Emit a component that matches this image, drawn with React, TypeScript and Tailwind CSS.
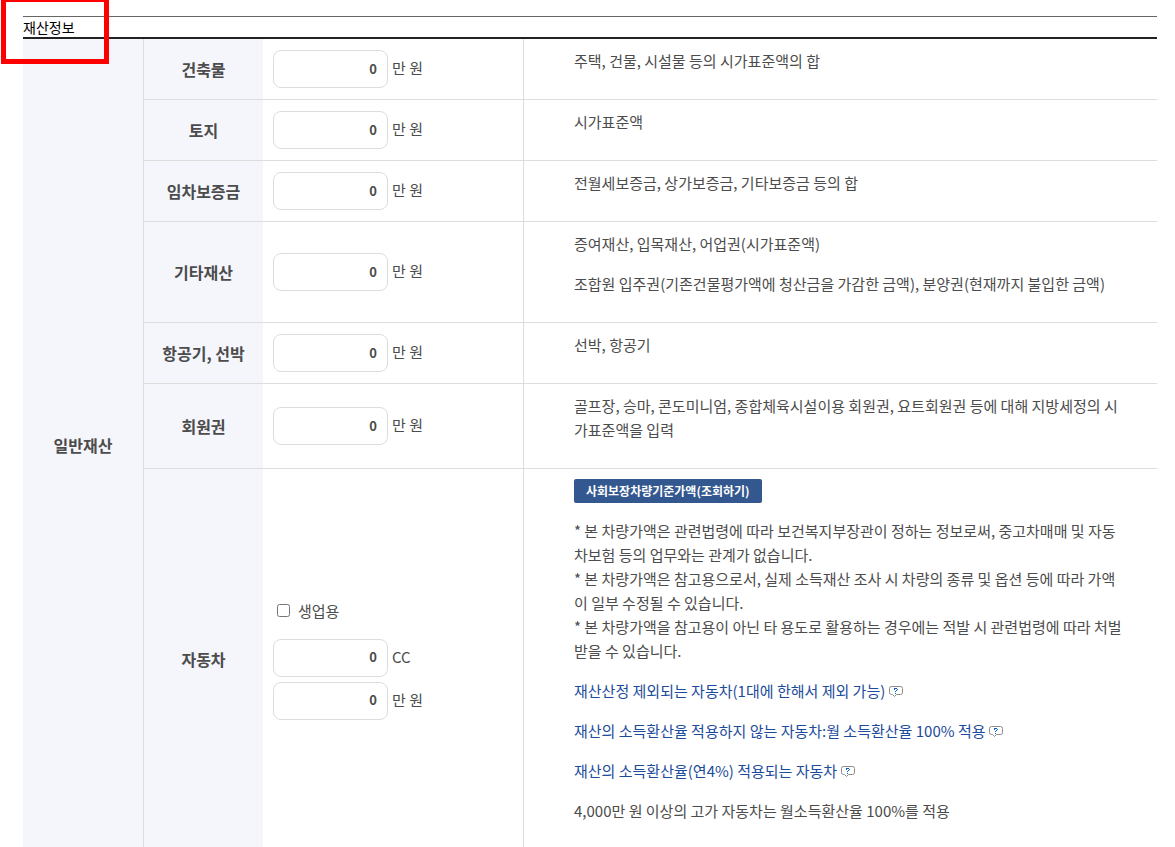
import type { ReactNode } from 'react';

type Field = { id: string; unit: string };

type Row = {
  title: string;
  fields: Field[];
  checkbox?: string;
  description: ReactNode;
};

function HelpIcon() {
  return (
    <svg width="14" height="11" viewBox="0 0 14 11" fill="none" className="ml-1 inline-block align-baseline" aria-hidden="true">
      <path
        d="M2.5 .5h9a2 2 0 0 1 2 2v4a2 2 0 0 1-2 2H7.5L5.5 10.5 3.5 8.5h-1a2 2 0 0 1-2-2v-4a2 2 0 0 1 2-2z"
        fill="#fff"
        stroke="#8c8c8c"
      />
      <path d="M5 2h3v1H5zM5 3h1v1H5zM8 3h1v1H8zM7 4h1v1H7zM6 5h1v1H6zM6 7h1v1H6z" fill="#0a5fc0" shapeRendering="crispEdges" />
    </svg>
  );
}

function Paragraph({ children }: { children: ReactNode }) {
  return <p className="mb-4">{children}</p>;
}

function HelpLink({ children }: { children: ReactNode }) {
  return (
    <p className="mb-4">
      <a href="#help" className="text-[#1c4b9c]">
        {children}
        <HelpIcon />
      </a>
    </p>
  );
}

function AmountField({ id, unit, title }: Field & { title: string }) {
  return (
    <div className="flex items-center gap-1">
      <input
        id={id}
        type="text"
        defaultValue="0"
        aria-label={title}
        className="h-[38px] w-[115px] rounded-lg border border-[#ddd] bg-white px-2.5 pb-0.5 text-right text-[13px] font-bold"
      />
      <label htmlFor={id} className="pb-0.5">{unit}</label>
    </div>
  );
}

const rows: Row[] = [
  {
    title: '건축물',
    fields: [{ id: 'building', unit: '만 원' }],
    description: <Paragraph>주택, 건물, 시설물 등의 시가표준액의 합</Paragraph>,
  },
  {
    title: '토지',
    fields: [{ id: 'land', unit: '만 원' }],
    description: <Paragraph>시가표준액</Paragraph>,
  },
  {
    title: '임차보증금',
    fields: [{ id: 'deposit', unit: '만 원' }],
    description: <Paragraph>전월세보증금, 상가보증금, 기타보증금 등의 합</Paragraph>,
  },
  {
    title: '기타재산',
    fields: [{ id: 'etc', unit: '만 원' }],
    description: (
      <>
        <Paragraph>증여재산, 입목재산, 어업권(시가표준액)</Paragraph>
        <Paragraph>조합원 입주권(기존건물평가액에 청산금을 가감한 금액), 분양권(현재까지 불입한 금액)</Paragraph>
      </>
    ),
  },
  {
    title: '항공기, 선박',
    fields: [{ id: 'vessel', unit: '만 원' }],
    description: <Paragraph>선박, 항공기</Paragraph>,
  },
  {
    title: '회원권',
    fields: [{ id: 'membership', unit: '만 원' }],
    description: (
      <Paragraph>
        골프장, 승마, 콘도미니엄, 종합체육시설이용 회원권, 요트회원권 등에 대해 지방세정의 시가표준액을 입력
      </Paragraph>
    ),
  },
  {
    title: '자동차',
    checkbox: '생업용',
    fields: [
      { id: 'car-cc', unit: 'CC' },
      { id: 'car-price', unit: '만 원' },
    ],
    description: (
      <>
        <button type="button" className="mb-4 flex h-6 items-center rounded-xs bg-[#33588f] px-3 text-xs font-bold text-white">
          사회보장차량기준가액(조회하기)
        </button>
        <Paragraph>
          * 본 차량가액은 관련법령에 따라 보건복지부장관이 정하는 정보로써, 중고차매매 및 자동차보험 등의 업무와는 관계가 없습니다.
          <br />* 본 차량가액은 참고용으로서, 실제 소득재산 조사 시 차량의 종류 및 옵션 등에 따라 가액이 일부 수정될 수 있습니다.
          <br />* 본 차량가액을 참고용이 아닌 타 용도로 활용하는 경우에는 적발 시 관련법령에 따라 처벌받을 수 있습니다.
        </Paragraph>
        <HelpLink>재산산정 제외되는 자동차(1대에 한해서 제외 가능)</HelpLink>
        <HelpLink>재산의 소득환산율 적용하지 않는 자동차:월 소득환산율 100% 적용</HelpLink>
        <HelpLink>재산의 소득환산율(연4%) 적용되는 자동차</HelpLink>
        <Paragraph>4,000만 원 이상의 고가 자동차는 월소득환산율 100%를 적용</Paragraph>
      </>
    ),
  },
];

function App() {
  return (
    <div className="relative h-screen overflow-hidden bg-white pt-4 pr-[18px] pl-[23px] font-['Noto_Sans_CJK_KR',sans-serif] text-[15px] leading-6 text-[#4c4c4c]">
      <h2 className="border-t border-[#666] text-sm leading-5 text-black">재산정보</h2>

      <table className="w-full table-fixed border-separate border-spacing-0 border-t-2 border-[#222]">
        <colgroup>
          <col className="w-[120px]" />
          <col className="w-[120px]" />
          <col className="w-[260px]" />
          <col />
        </colgroup>
        <tbody>
          {rows.map((row, index) => (
            <tr key={row.title}>
              {index === 0 && (
                <th rowSpan={rows.length} scope="rowgroup" className="bg-[#f5f6fc] text-base font-bold">
                  일반재산
                </th>
              )}
              <th scope="row" className="border-b border-l border-[#ddd] bg-[#f5f6fc] text-base font-bold">
                {row.title}
              </th>
              <td className="border-b border-[#ddd] px-2.5">
                {row.checkbox && (
                  <label className="mb-4 flex items-center gap-2 pl-1">
                    <input type="checkbox" className="size-[13px]" />
                    {row.checkbox}
                  </label>
                )}
                <div className="flex flex-col gap-[5px]">
                  {row.fields.map((field) => (
                    <AmountField key={field.id} {...field} title={row.title} />
                  ))}
                </div>
              </td>
              <td className="border-b border-l border-[#ddd] py-2.5 pr-7 pl-[50px] align-top">{row.description}</td>
            </tr>
          ))}
        </tbody>
      </table>

      {/* Highlight frame over the section title */}
      <div className="pointer-events-none absolute -top-[3px] left-px h-[67px] w-[108px] border-[5px] border-[#f00]" />
    </div>
  );
}

export default App;
